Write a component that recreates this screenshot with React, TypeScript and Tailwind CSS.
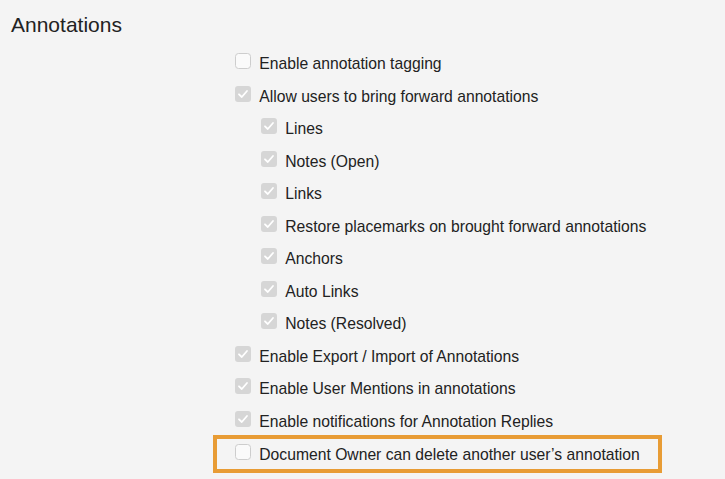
import React from "react";

type Item = { label: string; checked: boolean; nested?: boolean; highlight?: boolean };

const items: Item[] = [
  { label: "Enable annotation tagging", checked: false },
  { label: "Allow users to bring forward annotations", checked: true },
  { label: "Lines", checked: true, nested: true },
  { label: "Notes (Open)", checked: true, nested: true },
  { label: "Links", checked: true, nested: true },
  { label: "Restore placemarks on brought forward annotations", checked: true, nested: true },
  { label: "Anchors", checked: true, nested: true },
  { label: "Auto Links", checked: true, nested: true },
  { label: "Notes (Resolved)", checked: true, nested: true },
  { label: "Enable Export / Import of Annotations", checked: true },
  { label: "Enable User Mentions in annotations", checked: true },
  { label: "Enable notifications for Annotation Replies", checked: true },
  { label: "Document Owner can delete another user\u2019s annotation", checked: false, highlight: true },
];

const Box = ({ checked }: { checked: boolean }) => (
  <svg width="16" height="16" viewBox="0 0 16 16" className="shrink-0 mb-[5.5px]">
    {checked ? (
      <>
        <rect x="0" y="0" width="16" height="16" rx="3" fill="#d6d6d6" />
        <path d="M4 8.3 L6.8 11 L12 5" fill="none" stroke="#ffffff" strokeWidth="1.8" strokeLinecap="round" strokeLinejoin="round" />
      </>
    ) : (
      <rect x="0.5" y="0.5" width="15" height="15" rx="3" fill="#fafafa" stroke="#cdcdcd" />
    )}
  </svg>
);

const Row = ({ item }: { item: Item }) => {
  const content = (
    <div className={`flex items-center gap-[8.6px] ${item.nested ? "pl-[26px]" : ""}`}>
      <Box checked={item.checked} />
      <span className="text-[15.7px] text-[#222] whitespace-nowrap">{item.label}</span>
    </div>
  );
  if (item.highlight) {
    return (
      <div className="h-[32.56px] flex items-center pl-[213px]">
        <div className="h-[38px] w-[449px] shrink-0 border-[4px] border-[#e89c35] flex items-center pl-[17.7px]">
          {content}
        </div>
      </div>
    );
  }
  return <div className="h-[32.56px] flex items-center pl-[234.7px]">{content}</div>;
};

export default function App() {
  return (
    <div className="w-[725px] h-[479px] bg-[#f4f4f4] overflow-hidden" style={{ fontFamily: '"Liberation Sans", Arial, sans-serif' }}>
      <div className="h-[47.5px] pt-[1.4px] pl-[11px] flex items-center">
        <h1 className="text-[21px] text-[#222]">Annotations</h1>
      </div>
      <div className="flex flex-col">
        {items.map((it) => (
          <Row key={it.label} item={it} />
        ))}
      </div>
    </div>
  );
}
